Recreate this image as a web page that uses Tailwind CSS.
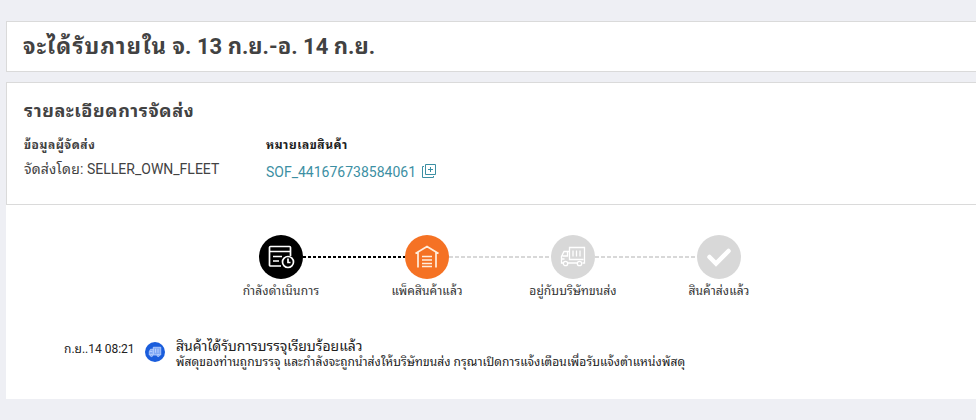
<!DOCTYPE html>
<html lang="th">
	<head>
		<meta charset="UTF-8" />
		<meta name="viewport" content="width=device-width, initial-scale=1.0" />
		<title>รายละเอียดการจัดส่ง</title>
		<script src="https://cdn.jsdelivr.net/npm/@tailwindcss/browser@4"></script>
	</head>
	<body
		class="h-screen overflow-hidden bg-[#eeeff4] pt-[21px] pl-1.5 font-[Roboto,Tahoma,'Noto_Sans_Thai_Looped',Loma,Waree,sans-serif] text-[#424242]"
	>
		<div class="flex h-[51px] items-center border border-r-0 border-[#dadada] bg-white pl-4">
			<h1 class="text-[22px] leading-8 font-bold whitespace-nowrap">
				<span class="tracking-[1.2px]">จะได้รับภายใน</span> จ. 13 ก.ย.-อ. 14 ก.ย.
			</h1>
		</div>

		<div class="mt-2.5 h-[123px] border border-r-0 border-[#dadada] bg-white pt-4 pl-[17px]">
			<h2 class="text-lg leading-6 font-bold tracking-[0.65px] whitespace-nowrap">รายละเอียดการจัดส่ง</h2>
			<div class="mt-2.5 flex whitespace-nowrap">
				<div class="w-[242px]">
					<p class="text-xs leading-6 font-bold tracking-[0.5px]">ข้อมูลผู้จัดส่ง</p>
					<p class="text-sm leading-6"><span class="tracking-[0.2px]">จัดส่งโดย:</span> SELLER_OWN_FLEET</p>
				</div>
				<div>
					<p class="text-xs leading-6 font-bold tracking-[0.5px] text-[#212121]">หมายเลขสินค้า</p>
					<div class="mt-[3px] flex items-center gap-[5px] text-[#3c8fa3]">
						<span class="text-sm leading-6">SOF_441676738584061</span>
						<svg class="-mt-0.5 h-4 w-4" fill="none" stroke="currentColor" viewBox="0 0 16 16">
							<path d="M4.500 1.500h10v10h-10zM3 3.500H1.500v11h11V13M9.500 4v5M7 6.500h5"></path>
						</svg>
					</div>
				</div>
			</div>
		</div>

		<div class="h-[194px] bg-white pt-[30px]">
			<div class="ml-[202px] flex text-xs whitespace-nowrap text-[#333]">
				<div class="relative flex w-[146px] flex-col items-center">
					<div class="absolute top-[21px] left-[95px] h-0.5 w-[102px] bg-[repeating-linear-gradient(90deg,#000_0_3px,transparent_3px_5px)]"></div>
					<div class="flex h-11 w-11 items-center justify-center rounded-full bg-black">
						<svg class="h-7 w-7" fill="none" stroke="#fff" stroke-width="1.700" viewBox="0 0 28 28">
							<path d="M14 23H3.500a1 1 0 01-1-1V4.500a1 1 0 011-1h19a1 1 0 011 1V13M2.500 8.500h21M6 13.500h9M6 18h6"></path>
							<circle cx="21" cy="19" r="5.500"></circle>
							<path d="M21 15.500V19.500h2.500"></path>
						</svg>
					</div>
					<span class="mt-0.5 leading-5 tracking-[0.2px]">กำลังดำเนินการ</span>
				</div>
				<div class="relative flex w-[146px] flex-col items-center">
					<div class="absolute top-[21px] left-[95px] h-0.5 w-[102px] bg-[repeating-linear-gradient(90deg,#d8d8d8_0_4px,transparent_4px_6px)]"></div>
					<div class="flex h-11 w-11 items-center justify-center rounded-full bg-[#f57224]">
						<svg class="h-7 w-7" fill="none" stroke="#ffeedd" stroke-width="1.700" viewBox="0 0 28 28">
							<path d="M2.500 10.500L14 3.500l11.500 7M5 9.500V24.500M23 9.500V24.500M9 13.500h10M9 17h10M9 20.500h10M9 23.500h10"></path>
						</svg>
					</div>
					<span class="mt-0.5 leading-5 tracking-[0.1px]">แพ็คสินค้าแล้ว</span>
				</div>
				<div class="relative flex w-[146px] flex-col items-center">
					<div class="absolute top-[21px] left-[95px] h-0.5 w-[102px] bg-[repeating-linear-gradient(90deg,#d8d8d8_0_4px,transparent_4px_6px)]"></div>
					<div class="flex h-11 w-11 items-center justify-center rounded-full bg-[#d8d8d8]">
						<svg class="h-7 w-7" fill="none" stroke="#fff" stroke-width="1.300" viewBox="0 0 28 28">
							<path d="M4.500 20H2.500v-6.500l2.500-5h5.500V4.500h15V20h-2M8.500 20h10M3.500 13h5V9M10.500 8v8.500h14M14 7.500v6M17.500 7.500v6M21 7.500v6M2.500 16h3"></path>
							<circle cx="6.500" cy="20.500" r="2.200"></circle>
							<circle cx="20.500" cy="20.500" r="2.200"></circle>
						</svg>
					</div>
					<span class="mt-0.5 leading-5 tracking-[0.1px]">อยู่กับบริษัทขนส่ง</span>
				</div>
				<div class="flex w-[146px] flex-col items-center">
					<div class="flex h-11 w-11 items-center justify-center rounded-full bg-[#d8d8d8]">
						<svg class="h-7 w-7" fill="none" stroke="#fff" stroke-width="4.500" viewBox="0 0 28 28">
							<path stroke-linecap="round" stroke-linejoin="miter" d="M4.500 14l6.500 6.500L23.500 8"></path>
						</svg>
					</div>
					<span class="mt-0.5 leading-5 tracking-[0.1px]">สินค้าส่งแล้ว</span>
				</div>
			</div>

			<div class="mt-[35px] flex whitespace-nowrap text-[#212121]">
				<span class="w-[133px] pt-[3px] pl-[58px] text-xs leading-5">ก.ย..14 08:21</span>
				<div class="mt-1.5 ml-1.5 flex h-5 w-5 items-center justify-center rounded-full bg-[#1a5ddc]">
					<svg class="h-3.5 w-3.5" fill="#7fa8f5" stroke="#c5d8ff" stroke-width="1.500" viewBox="0 0 28 28">
						<path d="M2.500 20v-6.500l2.500-5h5.500V4.500h15V20z"></path>
						<path fill="none" d="M3.500 13h5M10.500 8v11M15 7.500v8M20 7.500v8"></path>
						<circle cx="7" cy="21" r="2.200"></circle>
						<circle cx="20.500" cy="21" r="2.200"></circle>
					</svg>
				</div>
				<div class="ml-[11px] pt-px">
					<p class="text-sm leading-[18px] tracking-[-0.03px]">สินค้าได้รับการบรรจุเรียบร้อยแล้ว</p>
					<p class="text-xs leading-[15px] tracking-[0.08px]">
						พัสดุของท่านถูกบรรจุ และกำลังจะถูกนำส่งให้บริษัทขนส่ง กรุณาเปิดการแจ้งเตือนเพื่อรับแจ้งตำแหน่งพัสดุ
					</p>
				</div>
			</div>
		</div>
	</body>
</html>
